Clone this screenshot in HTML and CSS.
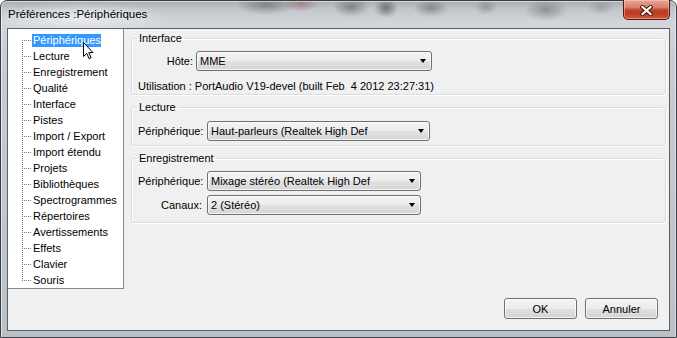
FILE: index.html
```html
<!DOCTYPE html>
<html lang="fr">
<head>
<meta charset="utf-8">
<title>Préférences</title>
<link rel="stylesheet" href="styles.css">
</head>
<body>
<div class="window">
  <div class="titlebar">
    <span class="title">Préférences :Périphériques</span>
    <button class="close" aria-label="Fermer">
      <svg width="13" height="11" viewBox="0 0 13 11">
        <path d="M2.5 2 L10.5 9 M10.5 2 L2.5 9" stroke="#4a1409" stroke-width="4.2" stroke-linecap="square" fill="none"/>
        <path d="M2.5 2 L10.5 9 M10.5 2 L2.5 9" stroke="#ffffff" stroke-width="2.2" stroke-linecap="square" fill="none"/>
      </svg>
    </button>
  </div>
  <div class="client">
    <div class="main">
      <div class="tree">
        <ul>
          <li><span class="sel">Périphériques</span></li>
          <li><span>Lecture</span></li>
          <li><span>Enregistrement</span></li>
          <li><span>Qualité</span></li>
          <li><span>Interface</span></li>
          <li><span>Pistes</span></li>
          <li><span>Import / Export</span></li>
          <li><span>Import étendu</span></li>
          <li><span>Projets</span></li>
          <li><span>Bibliothèques</span></li>
          <li><span>Spectrogrammes</span></li>
          <li><span>Répertoires</span></li>
          <li><span>Avertissements</span></li>
          <li><span>Effets</span></li>
          <li><span>Clavier</span></li>
          <li><span>Souris</span></li>
        </ul>
        <svg class="cursor" width="11" height="18" viewBox="0 0 11 18">
          <path d="M0.5 0.5 V14.5 L3.8 11.4 L6.2 16.8 L8.1 15.9 L5.8 10.6 H10 Z" fill="#ffffff" stroke="#000000" stroke-width="1" stroke-linejoin="miter"/>
        </svg>
      </div>
      <div class="groups">
        <fieldset class="group g-iface">
          <legend>Interface</legend>
          <div class="row r-host">
            <label class="lbl l-host">Hôte:</label>
            <div class="combo c-host">MME</div>
          </div>
          <div class="info">Utilisation : PortAudio V19-devel (built Feb&nbsp; 4 2012 23:27:31)</div>
        </fieldset>
        <fieldset class="group g-play">
          <legend>Lecture</legend>
          <div class="row r-play">
            <label class="lbl l-dev">Périphérique:</label>
            <div class="combo c-play">Haut-parleurs (Realtek High Def</div>
          </div>
        </fieldset>
        <fieldset class="group g-rec">
          <legend>Enregistrement</legend>
          <div class="row r-rec">
            <label class="lbl l-dev">Périphérique:</label>
            <div class="combo c-rec">Mixage stéréo (Realtek High Def</div>
          </div>
          <div class="row r-chan">
            <label class="lbl l-dev">Canaux:</label>
            <div class="combo c-rec">2 (Stéréo)</div>
          </div>
        </fieldset>
      </div>
    </div>
    <div class="footer">
      <button class="btn">OK</button>
      <button class="btn">Annuler</button>
    </div>
  </div>
</div>
</body>
</html>
```
FILE: styles.css
```css
html, body {
  margin: 0;
  padding: 0;
}
body {
  width: 677px;
  height: 338px;
  overflow: hidden;
  background: #ffffff;
  font-family: "Liberation Sans", Arial, sans-serif;
  font-size: 11px;
  color: #000;
}

.window {
  box-sizing: border-box;
  width: 677px;
  height: 338px;
  border: 1px solid #3a3f45;
  border-radius: 7px 7px 0 0;
  padding: 0 6px 6px;
  display: flex;
  flex-direction: column;
  background:
    radial-gradient(ellipse 90px 16px at 80px 17px, rgba(255,255,255,0.55), rgba(255,255,255,0) 100%),
    radial-gradient(ellipse 30px 10px at 265px 4px, rgba(70,70,70,0.45), rgba(70,70,70,0) 100%),
    radial-gradient(ellipse 18px 8px at 300px 3px, rgba(130,40,40,0.35), rgba(130,40,40,0) 100%),
    radial-gradient(ellipse 18px 10px at 350px 6px, rgba(60,60,60,0.45), rgba(60,60,60,0) 100%),
    radial-gradient(ellipse 12px 10px at 385px 7px, rgba(40,40,40,0.5), rgba(40,40,40,0) 100%),
    radial-gradient(ellipse 18px 9px at 430px 7px, rgba(60,60,60,0.42), rgba(60,60,60,0) 100%),
    radial-gradient(ellipse 12px 8px at 485px 6px, rgba(80,80,80,0.35), rgba(80,80,80,0) 100%),
    radial-gradient(ellipse 22px 11px at 545px 9px, rgba(60,60,60,0.38), rgba(60,60,60,0) 100%),
    radial-gradient(ellipse 14px 8px at 600px 6px, rgba(90,90,90,0.3), rgba(90,90,90,0) 100%),
    linear-gradient(to bottom, #a9aeb3 0px, #c3c8cd 9px, #d2d6da 22px, #c9cdd2 60px, #bcc1c6 100%);
  box-shadow: inset 1px 0 0 rgba(255,255,255,0.55), inset -1px 0 0 rgba(255,255,255,0.45), inset 0 1px 0 rgba(255,255,255,0.5);
}

.titlebar {
  height: 27px;
  display: flex;
  align-items: flex-start;
  flex-shrink: 0;
}
.title {
  padding: 6px 0 0 1px;
  font-size: 11.5px;
  line-height: 14px;
  color: #000;
  text-shadow: 0 0 6px rgba(255,255,255,0.8);
}
.close {
  margin: -1px 0 0 auto;
  width: 47px;
  height: 20px;
  padding: 0;
  border: 1px solid #4d1a10;
  border-top: none;
  border-radius: 0 0 5px 5px;
  display: flex;
  align-items: center;
  justify-content: center;
  background: linear-gradient(to bottom, #e8a898 0%, #d97e67 40%, #c0422a 52%, #b93a22 70%, #d2583c 100%);
  box-shadow: inset 0 0 0 1px rgba(255,210,200,0.45);
}
.close svg { display: block; margin-top: 1px; }

.client {
  flex: 1;
  border: 1px solid #5a6068;
  background: #f0f0f0;
  display: flex;
  flex-direction: column;
}

.main {
  height: 260px;
  display: flex;
}

.tree {
  position: relative;
  width: 115px;
  height: 259px;
  background: #ffffff;
  border-right: 1px solid #828790;
  border-bottom: 1px solid #828790;
}
.tree ul {
  list-style: none;
  margin: 0;
  padding: 3px 0 0;
  background-image: repeating-linear-gradient(to bottom, #7a7a7a 0 1px, transparent 1px 2px);
  background-repeat: no-repeat;
  background-position: 14px 11px;
  background-size: 1px 241px;
}
.tree li {
  height: 16px;
  padding-left: 24px;
  display: flex;
  align-items: center;
  white-space: nowrap;
  background-image: repeating-linear-gradient(to right, #7a7a7a 0 1px, transparent 1px 2px);
  background-repeat: no-repeat;
  background-position: 16px 8px;
  background-size: 8px 1px;
}
.tree li span {
  display: block;
  padding: 0 1px;
  line-height: 16px;
}
.tree li span.sel {
  background: #3399ff;
  color: #ffffff;
  line-height: 13px;
  padding: 0 0 0 1px;
  margin-top: 1px;
}
.cursor {
  position: absolute;
  left: 75px;
  top: 13px;
}

.groups {
  flex: 1;
  margin: 3px 3px 0 7px;
  display: flex;
  flex-direction: column;
}

.group {
  margin: 0;
  border: 1px solid #d5dfe5;
  border-radius: 3px;
  padding: 0 0 0 6px;
  box-shadow: inset 1px 1px 0 #ffffff, 1px 1px 0 #ffffff;
}
.group legend {
  padding: 0 2px;
  margin-left: -1px;
  line-height: 13px;
  font-size: 11px;
}
.g-iface { padding-bottom: 1px; }
.g-play { margin-top: 6px; padding-bottom: 4px; }
.g-rec { margin-top: 6px; padding-bottom: 7px; }

.row {
  display: flex;
  align-items: center;
}
.r-host { margin-top: 6px; }
.r-play { margin-top: 7px; }
.r-rec { margin-top: 6px; }
.r-chan { margin-top: 4px; }

.lbl {
  text-align: right;
  line-height: 13px;
  white-space: nowrap;
}
.l-host { width: 55px; margin-right: 3px; }
.l-dev { width: 64px; margin-right: 5px; }

.info {
  margin-top: 9px;
  line-height: 13px;
  white-space: nowrap;
}

.combo {
  position: relative;
  box-sizing: border-box;
  height: 20px;
  padding: 0 18px 0 3px;
  line-height: 18px;
  border: 1px solid #707070;
  border-radius: 3px;
  background: linear-gradient(to bottom, #f4f4f4 0%, #ececec 50%, #e2e2e2 51%, #d6d6d6 100%);
  box-shadow: inset 0 0 0 1px rgba(255,255,255,0.7);
  white-space: nowrap;
}
.combo::after {
  content: "";
  position: absolute;
  right: 5px;
  top: 7px;
  border-left: 3.5px solid transparent;
  border-right: 3.5px solid transparent;
  border-top: 4px solid #000;
}
.c-host { width: 236px; }
.c-play { width: 223px; }
.c-rec { width: 214px; }

.footer {
  flex: 1;
  display: flex;
  justify-content: flex-end;
  align-items: flex-start;
  gap: 8px;
  padding: 9px 11px 0 0;
}
.btn {
  width: 73px;
  height: 21px;
  padding: 0;
  font-family: "Liberation Sans", Arial, sans-serif;
  font-size: 11px;
  color: #000;
  border: 1px solid #707070;
  border-radius: 3px;
  background: linear-gradient(to bottom, #f4f4f4 0%, #ececec 50%, #e0e0e0 51%, #d4d4d4 100%);
  box-shadow: inset 0 0 0 1px rgba(255,255,255,0.7);
}
```
